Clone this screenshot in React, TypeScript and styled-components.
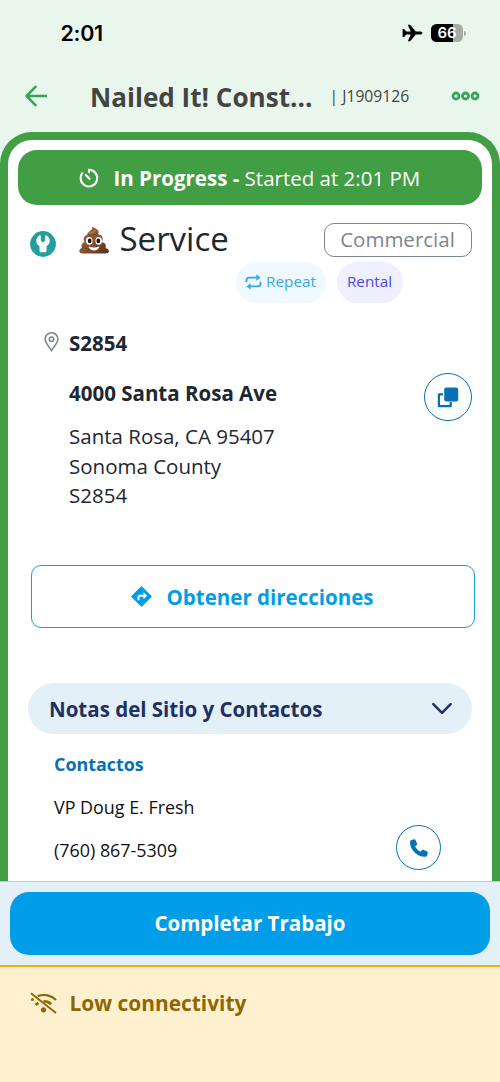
import React from "react";
import styled, { createGlobalStyle } from "styled-components";

const GlobalStyle = createGlobalStyle`
  * { box-sizing: border-box; }
  body { margin: 0; background: #e9f6ec; }
  button { appearance: none; margin: 0; padding: 0; background: none; border: 0; font: inherit; color: inherit; }
  svg { display: block; flex: none; }
`;

const Screen = styled.div`
  display: flex;
  flex-direction: column;
  width: 500px;
  height: 1082px;
  overflow: hidden;
  background: #e9f6ec;
  font-family: "Open Sans", sans-serif;
  color: #212730;
`;

const Label = styled.span<{ size: number; weight?: number; tone?: string }>`
  font-size: ${(p) => p.size}px;
  font-weight: ${(p) => p.weight ?? 400};
  color: ${(p) => p.tone ?? "inherit"};
  line-height: 1.36;
  white-space: pre;
`;

const StatusBar = styled.div`
  display: flex;
  align-items: center;
  justify-content: space-between;
  height: 66px;
  padding: 0 34px 0 60.5px;
`;

const Clock = styled.span`
  font: 600 21.5px/26px Inter, sans-serif;
  letter-spacing: -0.3px;
  color: #000;
`;

const StatusIcons = styled.div`
  display: flex;
  align-items: center;
  gap: 8px;
`;

const Battery = styled.div`
  display: flex;
  align-items: center;
  gap: 1px;
`;

const BatteryBody = styled.div`
  width: 32px;
  height: 18px;
  border-radius: 5.5px;
  background: linear-gradient(90deg, #000 68%, #a3ada5 68%);
  color: #fff;
  font: 600 15px/18px Inter, sans-serif;
  text-align: center;
`;

const BatteryTip = styled.div`
  width: 2px;
  height: 5px;
  border-radius: 0 2px 2px 0;
  background: #a3ada5;
`;

const Header = styled.header`
  display: flex;
  align-items: center;
  height: 66px;
  padding: 0 20px 6px 24px;
`;

const HeaderTitle = styled.h1`
  margin: 0 0 0 42px;
  padding-top: 3px;
  width: 239.5px;
  display: flex;
`;

const JobNumber = styled.div`
  display: flex;
  padding-top: 2px;
`;

const MoreButton = styled.button`
  margin-left: auto;
`;

const Frame = styled.main`
  height: 749px;
  flex: none;
  overflow: hidden;
  border: 8px solid #419e44;
  border-bottom: 0;
  border-radius: 32px 32px 0 0;
  background: #fff;
`;

const Banner = styled.div`
  display: flex;
  align-items: center;
  height: 55px;
  margin: 10px 10px 0;
  padding: 0 0 0 60px;
  border-radius: 19px;
  background: #419e44;
  color: #fff;
`;

const BannerText = styled.div`
  margin-left: 13.5px;
  display: flex;
  padding-top: 2px;
`;

const TitleRow = styled.div`
  display: flex;
  align-items: flex-start;
  height: 57px;
  padding: 18px 20px 0 22px;
`;

const TitleIcon = styled.div`
  margin-top: 7.5px;
`;

const TitleText = styled.h2`
  margin: -6.5px 0 0 11px;
  display: flex;
`;

const Emoji = styled.div`
  margin: 1.5px 0 0 22.5px;
`;

const CategoryBadge = styled.div`
  display: flex;
  align-items: center;
  justify-content: center;
  width: 148px;
  height: 34px;
  padding-right: 1px;
  margin-left: auto;
  border: 1.5px solid #7d8590;
  border-radius: 10px;
`;

const Tags = styled.div`
  display: flex;
  gap: 11px;
  height: 40px;
  padding-left: 228px;
`;

const Tag = styled.div<{ wide: number; bg: string; fg: string }>`
  display: flex;
  align-items: center;
  justify-content: center;
  gap: 4px;
  width: ${(p) => p.wide}px;
  height: 41px;
  padding: 0 1px 2px 0;
  border-radius: 21px;
  background: ${(p) => p.bg};
  color: ${(p) => p.fg};
`;

const Location = styled.section`
  display: flex;
  height: 262.5px;
  padding: 27px 20px 0 36px;
`;

const PinSlot = styled.div`
  width: 25px;
  padding-top: 3px;
`;

const AddressLines = styled.div`
  display: flex;
  flex-direction: column;
  flex: 1;
`;

const Line = styled.div<{ h: number }>`
  display: flex;
  align-items: center;
  height: ${(p) => p.h}px;
`;

const RoundButton = styled.button<{ size: number }>`
  display: flex;
  align-items: center;
  justify-content: center;
  flex: none;
  width: ${(p) => p.size}px;
  height: ${(p) => p.size}px;
  border: 1.5px solid #0671b4;
  border-radius: 50%;
`;

const CopySlot = styled.div`
  padding-top: 44px;
`;

const DirectionsButton = styled.button`
  display: flex;
  align-items: center;
  width: 444px;
  height: 63.5px;
  margin-left: 22.5px;
  padding: 1px 0 0 99px;
  gap: 15px;
  border: 1.5px solid #1a9ee0;
  border-radius: 10px;
  color: #029de8;
`;

const ButtonText = styled.div`
  display: flex;
  padding-top: 2px;
`;

const AccordionHeader = styled.button`
  display: flex;
  align-items: center;
  justify-content: space-between;
  width: 444px;
  height: 51px;
  margin: 55px 0 0 20px;
  padding: 0 20px 0 21px;
  border-radius: 26px;
  background: #e3f0f8;
`;

const Contacts = styled.section`
  display: flex;
  padding: 10px 51px 0 46px;
  justify-content: space-between;
`;

const ContactLines = styled.div`
  display: flex;
  flex-direction: column;
`;

const CallSlot = styled.div`
  padding-top: 81px;
`;

const ActionBar = styled.div`
  flex: none;
  height: 84px;
  padding: 9.5px 10px 10px;
  border-top: 1px solid #bccad4;
  background: #e3f0f8;
`;

const PrimaryButton = styled.button`
  display: flex;
  align-items: center;
  justify-content: center;
  width: 480px;
  height: 63.5px;
  padding: 1px 0 0 0;
  border-radius: 19px;
  background: #029de8;
`;

const Connectivity = styled.footer`
  flex: 1;
  display: flex;
  align-items: flex-start;
  gap: 11.5px;
  padding: 22px 0 0 30px;
  border-top: 2px solid #ecb015;
  background: #fff1d0;
`;

const NetworkSlot = styled.div`
  padding-top: 3px;
`;

const PlaneIcon = () => (
  <svg width="21" height="18" viewBox="0 0 21 18" fill="#000">
    <path d="M20.5 9c0 .9-1 1.5-2.6 1.5h-4.1L8.1 17.3H5.8l2.9-6.8H4.2L2.2 13H.6V5h1.6l2 2.5h4.5L5.8.7h2.3l5.7 6.8h4.1c1.6 0 2.6.6 2.6 1.5z" />
  </svg>
);

const BackIcon = () => (
  <svg width="24" height="22" viewBox="0 0 24 22" fill="none" stroke="#3aa35b" strokeWidth="2.5">
    <path d="M12.2 1.2 2.5 11l9.7 9.8M2.5 11H23" strokeLinejoin="round" />
  </svg>
);

const MoreIcon = () => (
  <svg width="29" height="10" viewBox="0 0 29 10" fill="none" stroke="#3aa35b" strokeWidth="2.8">
    <circle cx="5" cy="5" r="3" />
    <circle cx="14.5" cy="5" r="3" />
    <circle cx="24" cy="5" r="3" />
  </svg>
);

const TimerIcon = () => (
  <svg width="22" height="22" viewBox="0 0 22 22" fill="none" stroke="#fff" strokeWidth="2.1">
    <path d="M11 6V2.8A8.3 8.3 0 1 1 4.900 5.400" />
    <path d="m7.800 8 3.700 3.700" strokeLinecap="round" />
  </svg>
);

const WrenchIcon = () => (
  <svg width="26" height="26" viewBox="0 0 26 26">
    <circle cx="13" cy="13" r="12.9" fill="#249f9f" />
    <path
      d="M9.900 4.300c.5-.2.9.1.900.600v4.300c0 .4.1.7.4.9l1.100.9c.4.300 1 .300 1.400 0l1.100-.9c.3-.2.4-.5.4-.9V4.900c0-.5.4-.8.9-.6 2.200 1 3.600 3.100 3.600 5.500 0 2.400-1.300 4.400-3.200 5.400v4.600c0 .9-.7 1.500-1.500 1.500h-4c-.8 0-1.500-.6-1.500-1.500v-4.600c-1.900-1-3.200-3-3.200-5.400 0-2.400 1.400-4.500 3.600-5.500z"
      fill="#fff"
    />
  </svg>
);

const PoopIcon = () => (
  <svg width="30" height="29" viewBox="0 0 30 29">
    <defs>
      <linearGradient id="swirl" x1="0" y1="0" x2="1" y2="1">
        <stop offset="0" stopColor="#a9714a" />
        <stop offset="0.55" stopColor="#85502f" />
        <stop offset="1" stopColor="#593019" />
      </linearGradient>
    </defs>
    <path
      d="M12.200.4c1 2.200 6.300 2.600 7.300 6 .3 1.100 0 2-.5 2.800 2.800.2 4.700 2 4.700 4.300 0 1.800-.7 2.900-1.300 3.600 2.600.2 4.500 1.700 4.500 4 0 .8-.2 1.400-.5 1.900 2.200.5 3.500 1.500 3.500 3.100 0 1.800-1.600 2.400-3.800 2.400H4.200C1.700 28.500.3 27.700.3 26c0-1.600 1.200-2.900 2.900-3.300-.4-.6-.7-1.400-.7-2.200 0-2 1.300-3.300 3.200-3.600-.7-.7-1.100-1.700-1.100-2.900 0-2.400 1.800-3.900 3.700-4.300-.3-3.100 4.800-4.100 5-6.500.1-1-.5-1.900-1.100-2.800z"
      fill="url(#swirl)"
    />
    <path d="M8.500 9.700c3.300.8 7.600.4 10.200-1.300M3.500 22.500c3 1.500 6 1 8 2.500" fill="none" stroke="#6d3f22" strokeWidth=".8" />
    <path d="M10 8c2 0 5-.6 6.500-2.300" fill="none" stroke="#c08a61" strokeWidth="1" strokeLinecap="round" />
    <ellipse cx="10.300" cy="15.800" rx="3.300" ry="3.900" fill="#fff" />
    <ellipse cx="19.700" cy="15.800" rx="3.300" ry="3.900" fill="#fff" />
    <ellipse cx="10.700" cy="15.900" rx="1.900" ry="2.300" fill="#1d1411" />
    <ellipse cx="19.300" cy="15.900" rx="1.900" ry="2.300" fill="#1d1411" />
    <path d="M9.500 21.500c3.300 1.300 7.700 1.300 11 0-.8 2.600-2.900 4-5.500 4s-4.700-1.400-5.500-4z" fill="#fff" />
  </svg>
);

const RepeatIcon = () => (
  <svg width="17" height="16" viewBox="0 0 17 16" fill="none" stroke="#35abe2" strokeWidth="1.9">
    <path d="M1.500 7.600V6.500c0-1.900 1-2.900 2.700-2.900H12M15.500 8.400v1.100c0 1.900-1 2.900-2.700 2.900H5" strokeLinecap="round" />
    <path d="m11.400.3 4 3.300-4 3.300zM5.600 9.100l-4 3.300 4 3.300z" fill="#35abe2" stroke="none" />
  </svg>
);

const PinIcon = () => (
  <svg width="15" height="20" viewBox="0 0 15 20" fill="none" stroke="#7d8590" strokeWidth="1.6">
    <path d="M7.500 18.500C5 14.600 1.100 10.500 1.100 7.200a6.400 6.400 0 0 1 12.800 0c0 3.300-3.900 7.400-6.400 11.300z" />
    <circle cx="7.500" cy="7.300" r="2.200" />
  </svg>
);

const CopyIcon = () => (
  <svg width="22" height="21" viewBox="0 0 22 21">
    <path d="M6 7.300H1.900v11.800h11.800V15" fill="none" stroke="#0671b4" strokeWidth="2.2" strokeLinejoin="round" />
    <rect x="7.2" y="0.4" width="14" height="14" rx="2" fill="#0671b4" />
  </svg>
);

const DirectionsIcon = () => (
  <svg width="21" height="21" viewBox="0 0 21 21">
    <path d="M9.700.7a1.100 1.100 0 0 1 1.600 0l9 9c.4.500.4 1.100 0 1.600l-9 9c-.5.400-1.100.4-1.600 0l-9-9a1.100 1.100 0 0 1 0-1.600z" fill="#029de8" />
    <path d="M7.500 14.200v-2.900c0-1 .6-1.600 1.600-1.600h4" fill="none" stroke="#fff" strokeWidth="2" />
    <path d="m12.500 6.200 3.700 3.500-3.700 3.500z" fill="#fff" />
  </svg>
);

const ChevronIcon = () => (
  <svg width="20" height="12" viewBox="0 0 20 12" fill="none" stroke="#1f3164" strokeWidth="2.5">
    <path d="m1.300 1.100 8.700 8.700 8.700-8.700" strokeLinecap="round" strokeLinejoin="round" />
  </svg>
);

const PhoneIcon = () => (
  <svg width="18" height="18" viewBox="0 0 18 18" fill="#0671b4">
    <path d="M.1 2.100C.3 1 3.700.1 4.500.2c.5 0 .8.3 1 .7l1.600 3.700c.2.500.1 1-.3 1.300L5.100 7.300c1.100 2.400 3.100 4.400 5.600 5.500l1.400-1.700c.3-.4.8-.5 1.300-.3l3.700 1.600c.5.200.7.600.7 1.100-.1 1-.8 3.600-1.600 4.200C8 18.700-.9 10.500.1 2.100z" />
  </svg>
);

const NetworkIcon = () => (
  <svg width="28" height="22" viewBox="0 0 28 22" fill="none" stroke="#8f6700" strokeWidth="2.2">
    <path d="M1 1.200 26 21" strokeWidth="1.9" />
    <path d="M7.800 4.100C14 1.700 21.500 3.400 26 8" />
    <path d="M13.500 9.300c3-.2 5.600.9 7.700 2.900" strokeWidth="2.6" />
    <circle cx="2.400" cy="7.600" r="1.500" fill="#8f6700" stroke="none" />
    <path d="m5.500 12.800 3-2" strokeWidth="2.6" />
    <circle cx="13.500" cy="17.800" r="2.600" fill="#8f6700" stroke="none" />
  </svg>
);

export default function App() {
  return (
    <Screen>
      <GlobalStyle />
      <StatusBar>
        <Clock>2:01</Clock>
        <StatusIcons>
          <PlaneIcon />
          <Battery>
            <BatteryBody>66</BatteryBody>
            <BatteryTip />
          </Battery>
        </StatusIcons>
      </StatusBar>
      <Header>
        <BackIcon />
        <HeaderTitle>
          <Label size={26.1} weight={700} tone="#434543">Nailed It! Const...</Label>
        </HeaderTitle>
        <JobNumber><Label size={15.7} tone="#434543">| J1909126</Label></JobNumber>
        <MoreButton aria-label="More"><MoreIcon /></MoreButton>
      </Header>
      <Frame>
        <Banner>
          <TimerIcon />
          <BannerText>
            <Label size={20.5} weight={700}>In Progress - </Label>
            <Label size={20.5}>Started at 2:01 PM</Label>
          </BannerText>
        </Banner>
        <TitleRow>
          <TitleIcon><WrenchIcon /></TitleIcon>
          <Emoji><PoopIcon /></Emoji>
          <TitleText><Label size={33}>Service</Label></TitleText>
          <CategoryBadge><Label size={20.5} tone="#7d8590">Commercial</Label></CategoryBadge>
        </TitleRow>
        <Tags>
          <Tag wide={90} bg="#f0f9ff" fg="#35abe2"><RepeatIcon /><Label size={15.3}>Repeat</Label></Tag>
          <Tag wide={66} bg="#eeefff" fg="#4a4be0"><Label size={15.3}>Rental</Label></Tag>
        </Tags>
        <Location>
          <PinSlot><PinIcon /></PinSlot>
          <AddressLines>
            <Line h={29}><Label size={20.5} weight={700}>S2854</Label></Line>
            <Line h={72}><Label size={20.5} weight={700}>4000 Santa Rosa Ave</Label></Line>
            <Line h={14}><Label size={20.5}>Santa Rosa, CA 95407</Label></Line>
            <Line h={45}><Label size={20.5}>Sonoma County</Label></Line>
            <Line h={14}><Label size={20.5}>S2854</Label></Line>
          </AddressLines>
          <CopySlot><RoundButton size={48} aria-label="Copy"><CopyIcon /></RoundButton></CopySlot>
        </Location>
        <DirectionsButton>
          <DirectionsIcon />
          <ButtonText><Label size={20.5} weight={700}>Obtener direcciones</Label></ButtonText>
        </DirectionsButton>
        <AccordionHeader>
          <ButtonText><Label size={20.5} weight={700} tone="#1f3164">Notas del Sitio y Contactos</Label></ButtonText>
          <ChevronIcon />
        </AccordionHeader>
        <Contacts>
          <ContactLines>
            <Line h={41}><Label size={17.9} weight={700} tone="#0671b4">Contactos</Label></Line>
            <Line h={44}><Label size={17.9} tone="#111">VP Doug E. Fresh</Label></Line>
            <Line h={43}><Label size={17.9} tone="#111">(760) 867-5309</Label></Line>
          </ContactLines>
          <CallSlot><RoundButton size={45} aria-label="Call"><PhoneIcon /></RoundButton></CallSlot>
        </Contacts>
      </Frame>
      <ActionBar>
        <PrimaryButton><Label size={20.5} weight={700} tone="#fff">Completar Trabajo</Label></PrimaryButton>
      </ActionBar>
      <Connectivity>
        <NetworkSlot><NetworkIcon /></NetworkSlot>
        <Label size={20.9} weight={700} tone="#8f6700">Low connectivity</Label>
      </Connectivity>
    </Screen>
  );
}
